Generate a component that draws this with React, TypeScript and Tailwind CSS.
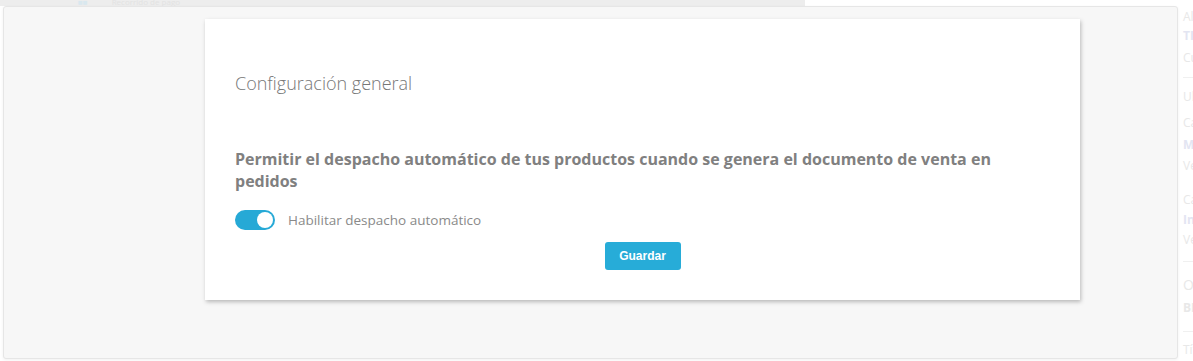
import React, { useState } from "react";

export default function App() {
  const [enabled, setEnabled] = useState(true);

  return (
    <div className="relative h-[361px] w-full overflow-hidden bg-white font-['Open_Sans',sans-serif]">
      {/* page behind the panel */}
      <div className="flex h-[361px]">
        <div className="flex-1">
          <div className="flex h-[6px] w-[805px] items-end gap-6 bg-[#ededed] pl-[78px]">
            <span className="text-[8px] leading-none text-[#d9e8ef]">■■</span>
            <span className="text-[8px] leading-none text-[#e2e2e2]">Recorrido de pago</span>
          </div>
        </div>
        <div className="w-[13px] overflow-hidden whitespace-nowrap pt-[8px] pl-[3px] text-[12px] text-[#e8e8e8]">
          <p className="leading-[17px]">Alertas</p>
          <p className="font-bold leading-[22px] text-[#e3e5f2]">TIENDA</p>
          <p className="leading-[22px]">Cuenta</p>
          <div className="my-[8px] border-t border-[#f0f0f0]" />
          <p className="leading-[22px]">Ultimos</p>
          <p className="mt-[4px] leading-[22px]">Canal</p>
          <p className="font-bold leading-[22px] text-[#e3e5f2]">Mercado</p>
          <p className="leading-[20px]">Ver</p>
          <p className="mt-[14px] leading-[20px]">Canal</p>
          <p className="font-bold leading-[20px] text-[#e3e5f2]">Integr</p>
          <p className="leading-[20px]">Ver</p>
          <div className="my-[11px] border-t border-[#f0f0f0]" />
          <p className="mt-[6px] text-[14px] leading-[24px]">Otros</p>
          <p className="font-bold leading-[22px]">BI</p>
          <div className="mt-[12px] mb-[8px] border-t border-[#f0f0f0]" />
          <p className="leading-[20px]">Título</p>
        </div>
      </div>

      {/* overlay panel */}
      <div className="absolute left-[3px] top-[6px] h-[353px] w-[1175px] rounded-[3px] border border-[#e6e6e6] bg-[#f7f7f7] shadow-[0_1px_3px_rgba(0,0,0,0.06)]">
        <div className="ml-[201px] mt-[12px] h-[281px] w-[875px] bg-white px-[30px] pt-[52px] shadow-[1px_2px_4px_rgba(0,0,0,0.25)]">
          <h2 className="text-[18px] font-light leading-[24px] text-[#777777]">Configuración general</h2>

          <p className="mt-[53px] text-[16px] font-bold leading-[22px] text-[#808080]">
            Permitir el despacho automático de tus productos cuando se genera el documento de venta en pedidos
          </p>

          <div className="mt-[18px] flex items-center gap-[13px]">
            <button
              onClick={() => setEnabled(!enabled)}
              className={`flex h-[20px] w-[40px] items-center rounded-full p-[2px] ${enabled ? "bg-[#26a9d6]" : "bg-[#cccccc]"}`}
            >
              <span className={`h-[16px] w-[16px] rounded-full bg-white ${enabled ? "ml-auto" : ""}`} />
            </button>
            <span className="text-[13.5px] leading-[20px] text-[#8a8a8a]">Habilitar despacho automático</span>
          </div>

          <div className="mt-[12px] flex justify-center">
            <button className="h-[28px] w-[76px] rounded-[3px] bg-[#27acd8] font-['Liberation_Sans',sans-serif] text-[12px] font-bold text-white">
              Guardar
            </button>
          </div>
        </div>
      </div>
    </div>
  );
}
